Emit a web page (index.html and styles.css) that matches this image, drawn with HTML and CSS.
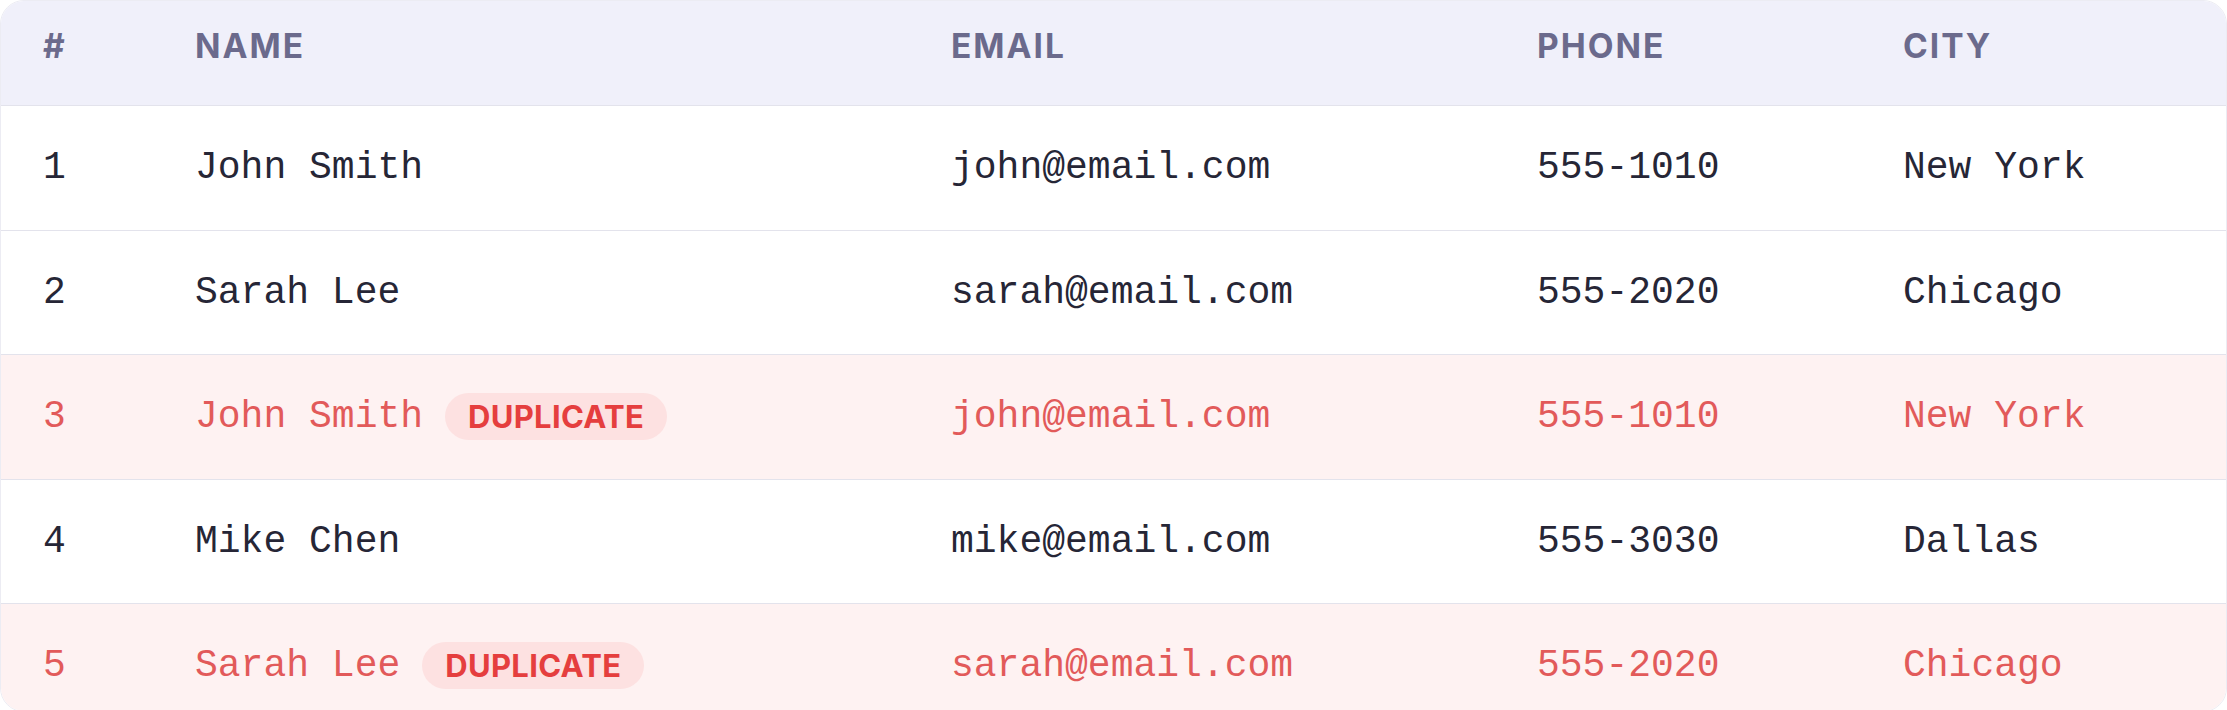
FILE: index.html
```html
<!DOCTYPE html>
<html lang="en">
<head>
<meta charset="utf-8">
<title>Contacts</title>
<link rel="stylesheet" href="styles.css">
</head>
<body>
<div class="table">
  <div class="row head">
    <div class="cell">#</div>
    <div class="cell">Name</div>
    <div class="cell">Email</div>
    <div class="cell">Phone</div>
    <div class="cell">City</div>
  </div>
  <div class="row">
    <div class="cell">1</div>
    <div class="cell">John Smith</div>
    <div class="cell">john@email.com</div>
    <div class="cell">555-1010</div>
    <div class="cell">New York</div>
  </div>
  <div class="row">
    <div class="cell">2</div>
    <div class="cell">Sarah Lee</div>
    <div class="cell">sarah@email.com</div>
    <div class="cell">555-2020</div>
    <div class="cell">Chicago</div>
  </div>
  <div class="row dup">
    <div class="cell">3</div>
    <div class="cell">John Smith <span class="badge">DUPLICATE</span></div>
    <div class="cell">john@email.com</div>
    <div class="cell">555-1010</div>
    <div class="cell">New York</div>
  </div>
  <div class="row">
    <div class="cell">4</div>
    <div class="cell">Mike Chen</div>
    <div class="cell">mike@email.com</div>
    <div class="cell">555-3030</div>
    <div class="cell">Dallas</div>
  </div>
  <div class="row dup">
    <div class="cell">5</div>
    <div class="cell">Sarah Lee <span class="badge">DUPLICATE</span></div>
    <div class="cell">sarah@email.com</div>
    <div class="cell">555-2020</div>
    <div class="cell">Chicago</div>
  </div>
</div>
</body>
</html>
```
FILE: styles.css
```css
html, body {
  margin: 0;
  padding: 0;
  background: #ffffff;
}

.table {
  box-sizing: border-box;
  height: 712px;
  overflow: hidden;
  border: 1px solid #ececf3;
  border-radius: 24px;
  background: #ffffff;
}

.row {
  box-sizing: border-box;
  display: grid;
  grid-template-columns: 152px 756px 586px 366px 1fr;
  align-items: center;
  height: 124.5px;
  padding: 0 0 0 42px;
  border-bottom: 1px solid #e3e3ec;
  font-family: "Liberation Mono", "Courier New", monospace;
  font-size: 38px;
  color: #262636;
}

.row.head {
  height: 105px;
  padding-bottom: 14px;
  background: #f0f0fa;
  font-family: "Inter", "Liberation Sans", sans-serif;
  font-weight: 700;
  font-size: 33.5px;
  letter-spacing: 2px;
  text-transform: uppercase;
  color: #6b6a8c;
}

.cell {
  display: flex;
  align-items: center;
  white-space: nowrap;
}

.row.dup {
  background: #fef2f2;
  color: #e25a5a;
}

.badge {
  margin-left: 22px;
  padding: 8px 23px;
  border-radius: 999px;
  background: #fde1e1;
  color: #e53e3e;
  font-family: "Inter", "Liberation Sans", sans-serif;
  font-weight: 700;
  font-size: 31px;
  letter-spacing: 0.3px;
  line-height: 31px;
}
```
